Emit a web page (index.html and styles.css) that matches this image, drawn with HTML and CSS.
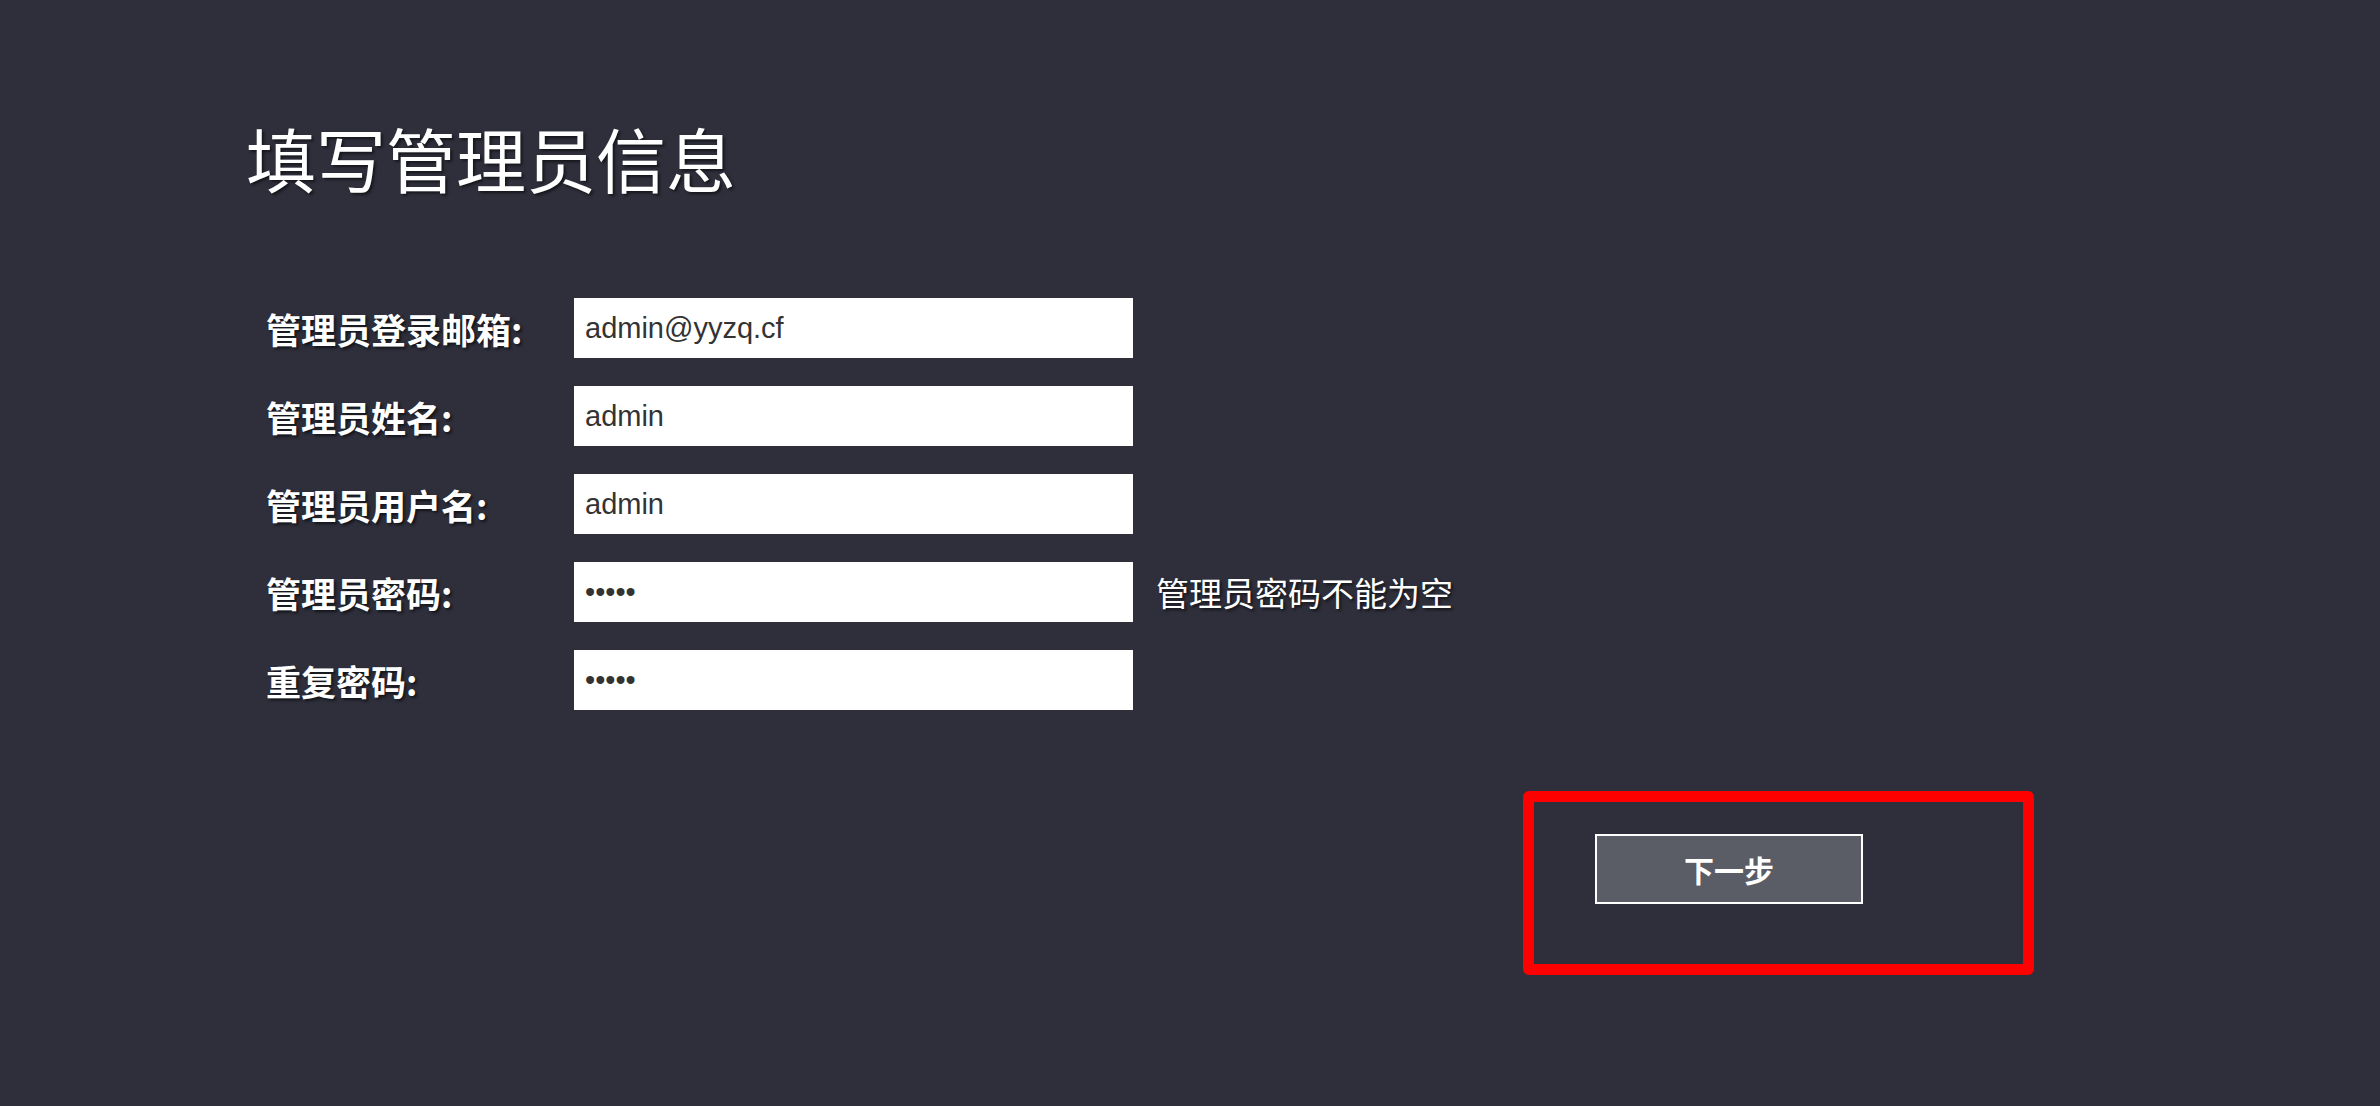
FILE: index.html
```html
<!DOCTYPE html>
<html lang="zh-CN">
<head>
<meta charset="utf-8">
<title>填写管理员信息</title>
<link rel="stylesheet" href="styles.css">
</head>
<body>
<div class="page">
  <h1 class="title">填写管理员信息</h1>
  <form class="form">
    <div class="row">
      <label class="label">管理员登录邮箱:</label>
      <input class="field" type="text" value="admin@yyzq.cf">
    </div>
    <div class="row">
      <label class="label">管理员姓名:</label>
      <input class="field" type="text" value="admin">
    </div>
    <div class="row">
      <label class="label">管理员用户名:</label>
      <input class="field" type="text" value="admin">
    </div>
    <div class="row">
      <label class="label">管理员密码:</label>
      <input class="field" type="password" value="admin">
      <span class="error">管理员密码不能为空</span>
    </div>
    <div class="row">
      <label class="label">重复密码:</label>
      <input class="field" type="password" value="admin">
    </div>
  </form>
  <div class="actions">
    <div class="highlight">
      <button class="next" type="button">下一步</button>
    </div>
  </div>
</div>
</body>
</html>
```

FILE: styles.css
```css
html, body {
  margin: 0;
  padding: 0;
  background: #2e2f3b;
}

body {
  font-family: "Noto Sans CJK SC", "Liberation Sans", sans-serif;
  color: #ffffff;
}

.page {
  padding: 120px 0 0 246px;
}

.title {
  margin: 0;
  font-size: 70px;
  line-height: 76px;
  font-weight: 400;
  color: #ffffff;
  text-shadow: 2px 2px 3px rgba(0, 0, 0, 0.55);
}

.form {
  margin: 102px 0 0 20px;
  display: flex;
  flex-direction: column;
  gap: 28px;
}

.row {
  display: flex;
  align-items: center;
  height: 60px;
}

.label {
  width: 308px;
  flex: none;
  font-size: 35px;
  font-weight: 700;
  color: #ffffff;
  text-shadow: 2px 2px 3px rgba(0, 0, 0, 0.6);
}

.field {
  box-sizing: border-box;
  width: 559px;
  height: 60px;
  border: none;
  outline: none;
  margin: 0;
  padding: 0 11px;
  background: #ffffff;
  color: #333333;
  font-family: "Liberation Sans", sans-serif;
  font-size: 29px;
}

.error {
  margin-left: 23px;
  font-size: 33px;
  color: #ffffff;
  text-shadow: 2px 2px 3px rgba(0, 0, 0, 0.6);
}

.actions {
  margin: 81px 0 0 1277px;
  display: flex;
}

.highlight {
  box-sizing: border-box;
  width: 511px;
  height: 184px;
  border: 11px solid #ff0000;
  border-radius: 6px;
  padding: 32px 0 0 61px;
}

.next {
  box-sizing: border-box;
  width: 268px;
  height: 70px;
  border: 2px solid #ffffff;
  background: #5a5c66;
  color: #ffffff;
  font-family: "Noto Sans CJK SC", sans-serif;
  font-size: 30px;
  font-weight: 700;
  padding: 0;
  margin: 0;
}
```
